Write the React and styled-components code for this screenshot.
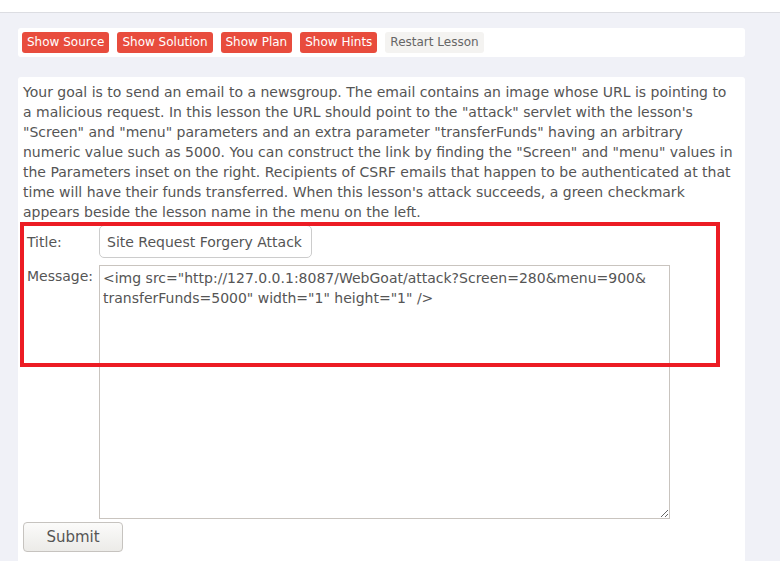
import React from "react";
import styled, { createGlobalStyle } from "styled-components";

const GlobalStyle = createGlobalStyle`
  body {
    margin: 0;
    background-color: #f0f1f7;
    font-family: "DejaVu Sans", Verdana, sans-serif;
    color: #555;
  }
`;

const TopBar = styled.div`
  height: 12px;
  background-color: #ffffff;
  border-bottom: 1px solid #dcdde2;
`;

const Main = styled.div`
  padding: 15px 35px 0 18px;
`;

const ButtonBar = styled.div`
  display: flex;
  align-items: flex-start;
  gap: 8px;
  height: 29px;
  box-sizing: border-box;
  padding: 4px 4px 5px;
  background-color: #ffffff;
  border-radius: 3px;
`;

const LessonButton = styled.button`
  font-family: "DejaVu Sans", Verdana, sans-serif;
  font-size: 12px;
  line-height: 21px;
  height: 21px;
  padding: 0 5px;
  border: none;
  border-radius: 3px;
  cursor: pointer;
  background-color: ${(p) => (p.$muted ? "#f4f3f1" : "#e84c3d")};
  color: ${(p) => (p.$muted ? "#666" : "#ffffff")};
`;

const ContentPanel = styled.div`
  margin-top: 20px;
  padding: 5px 10px 10px 5px;
  background-color: #ffffff;
  border-radius: 3px 3px 0 0;
`;

const Description = styled.p`
  margin: 0;
  font-size: 14px;
  line-height: 20px;
  color: #555;
`;

const Form = styled.form`
  position: relative;
  display: grid;
  grid-template-columns: 76px auto;
  row-gap: 7px;
  padding-top: 3px;
  justify-items: start;
`;

const Highlight = styled.div`
  position: absolute;
  left: -3px;
  top: 0;
  width: 700px;
  height: 145px;
  box-sizing: border-box;
  border: 4px solid #ec1c24;
  pointer-events: none;
`;

const Label = styled.label`
  font-size: 14px;
  line-height: 20px;
  padding-left: 4px;
  padding-top: ${(p) => (p.$top ? "1px" : "0")};
  align-self: ${(p) => (p.$top ? "start" : "center")};
  color: #555;
`;

const TitleInput = styled.input`
  box-sizing: border-box;
  width: 213px;
  height: 33px;
  padding: 0 7px;
  border: 1px solid #cccccc;
  border-radius: 5px;
  font-family: "DejaVu Sans", Verdana, sans-serif;
  font-size: 14px;
  color: #555;
`;

const MessageArea = styled.textarea`
  box-sizing: border-box;
  width: 571px;
  height: 254px;
  margin: 0;
  padding: 2px 3px;
  border: 1px solid #c9c4bf;
  font-family: "DejaVu Sans", Verdana, sans-serif;
  font-size: 14px;
  line-height: 20px;
  color: #555;
  resize: both;
`;

const SubmitButton = styled.button`
  grid-column: 1 / span 2;
  margin-top: -4px;
  width: 100px;
  height: 30px;
  border: 1px solid #c6c3bf;
  border-radius: 4px;
  background: linear-gradient(#fbfbfa, #ecebe8);
  font-family: "DejaVu Sans", Verdana, sans-serif;
  font-size: 15px;
  color: #555;
`;

const message =
  '<img src="http://127.0.0.1:8087/WebGoat/attack?Screen=280&menu=900&\ntransferFunds=5000" width="1" height="1" />';

export default function App() {
  return (
    <>
      <GlobalStyle />
      <TopBar />
      <Main>
        <ButtonBar>
          <LessonButton>Show Source</LessonButton>
          <LessonButton>Show Solution</LessonButton>
          <LessonButton>Show Plan</LessonButton>
          <LessonButton>Show Hints</LessonButton>
          <LessonButton $muted>Restart Lesson</LessonButton>
        </ButtonBar>
        <ContentPanel>
          <Description>
            Your goal is to send an email to a newsgroup. The email contains an
            image whose URL is pointing to a malicious request. In this lesson
            the URL should point to the "attack" servlet with the lesson's
            "Screen" and "menu" parameters and an extra parameter
            "transferFunds" having an arbitrary numeric value such as 5000. You
            can construct the link by finding the "Screen" and "menu" values in
            the Parameters inset on the right. Recipients of CSRF emails that
            happen to be authenticated at that time will have their funds
            transferred. When this lesson's attack succeeds, a green checkmark
            appears beside the lesson name in the menu on the left.
          </Description>
          <Form onSubmit={(e) => e.preventDefault()}>
            <Highlight />
            <Label>Title:</Label>
            <TitleInput defaultValue="Site Request Forgery Attack" />
            <Label $top>Message:</Label>
            <MessageArea defaultValue={message} />
            <SubmitButton>Submit</SubmitButton>
          </Form>
        </ContentPanel>
      </Main>
    </>
  );
}
